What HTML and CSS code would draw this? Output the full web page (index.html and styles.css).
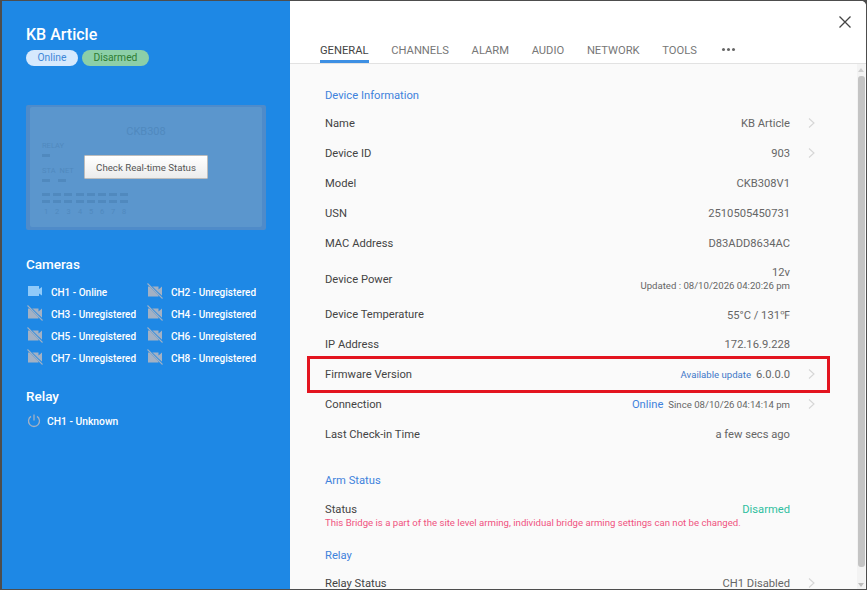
FILE: index.html
```html
<!DOCTYPE html>
<html lang="en">
<head>
  <meta charset="UTF-8">
  <title>KB Article - Device</title>
  <link rel="stylesheet" href="styles.css">
</head>
<body>
  <svg class="defs" width="0" height="0">
    <symbol id="chevron" viewBox="0 0 7 10"><path d="M1 0.500l5 4.500-5 4.500" fill="none" stroke="#d6d6d6" stroke-width="1.100"/></symbol>
    <symbol id="cam-off" viewBox="0 0 16 16">
      <path d="M1 3.500h10.500v3l3.500-3v9.500l-3.500-3v3.500H1z" fill="#a3b1c4"/>
      <path d="M1 0.500L15.500 15" stroke="#1e88e5" stroke-width="2"/>
      <path d="M0.500 0.500L15.500 15.500" stroke="#a3b1c4" stroke-width="1.100"/>
    </symbol>
  </svg>

  <div class="modal">
    <div class="side">
      <h1 class="side-title">KB Article</h1>
      <div class="badges">
        <span class="badge badge-online">Online</span>
        <span class="badge badge-disarmed">Disarmed</span>
      </div>

      <div class="board">
        <div class="board-inner">
          <div class="board-name">CKB308</div>
          <div class="board-label">RELAY</div>
          <div class="led-row"><i></i></div>
          <div class="board-label board-label-2"><span>STA</span><span>NET</span></div>
          <div class="led-row led-row-2"><i></i><i></i></div>
          <div class="led-grid">
            <i></i><i></i><i></i><i></i><i></i><i></i><i></i><i></i>
            <i></i><i></i><i></i><i></i><i></i><i></i><i></i><i></i>
            <span>1</span><span>2</span><span>3</span><span>4</span><span>5</span><span>6</span><span>7</span><span>8</span>
          </div>
        </div>
        <button class="board-btn">Check Real-time Status</button>
      </div>

      <h2 class="side-head">Cameras</h2>
      <div class="cams">
        <div class="cam">
          <svg class="cam-icon" viewBox="0 0 16 16"><path d="M1 3h11v3l3-2v8.500l-3-2v2.500H1z" fill="#90caf9"/></svg>
          CH1 - Online
        </div>
        <div class="cam"><svg class="cam-icon"><use href="#cam-off"/></svg>CH2 - Unregistered</div>
        <div class="cam"><svg class="cam-icon"><use href="#cam-off"/></svg>CH3 - Unregistered</div>
        <div class="cam"><svg class="cam-icon"><use href="#cam-off"/></svg>CH4 - Unregistered</div>
        <div class="cam"><svg class="cam-icon"><use href="#cam-off"/></svg>CH5 - Unregistered</div>
        <div class="cam"><svg class="cam-icon"><use href="#cam-off"/></svg>CH6 - Unregistered</div>
        <div class="cam"><svg class="cam-icon"><use href="#cam-off"/></svg>CH7 - Unregistered</div>
        <div class="cam"><svg class="cam-icon"><use href="#cam-off"/></svg>CH8 - Unregistered</div>
      </div>

      <h2 class="side-head relay-head">Relay</h2>
      <div class="relay">
        <svg class="relay-icon" viewBox="0 0 14 14"><path d="M7 0.500v6M4 2.400a5.500 5.500 0 1 0 6 0" fill="none" stroke="#a3b1c4" stroke-width="1.300"/></svg>
        CH1 - Unknown
      </div>
    </div>

    <div class="main">
      <div class="top">
        <svg class="close" viewBox="0 0 12 12"><path d="M0.500 0.500l11 11M11.500 0.500l-11 11" stroke="#444" stroke-width="1.300"/></svg>
        <div class="tabs">
          <span class="tab active">GENERAL</span>
          <span class="tab">CHANNELS</span>
          <span class="tab">ALARM</span>
          <span class="tab">AUDIO</span>
          <span class="tab">NETWORK</span>
          <span class="tab">TOOLS</span>
          <span class="tab-more"><i></i><i></i><i></i></span>
        </div>
      </div>

      <div class="body">
        <div class="content">
          <div class="section-title">Device Information</div>
          <div class="row"><span>Name</span><span class="val">KB Article</span><svg class="chev"><use href="#chevron"/></svg></div>
          <div class="row"><span>Device ID</span><span class="val">903</span><svg class="chev"><use href="#chevron"/></svg></div>
          <div class="row"><span>Model</span><span class="val">CKB308V1</span><span class="no-chev"></span></div>
          <div class="row"><span>USN</span><span class="val">2510505450731</span><span class="no-chev"></span></div>
          <div class="row"><span>MAC Address</span><span class="val">D83ADD8634AC</span><span class="no-chev"></span></div>
          <div class="row row-tall">
            <span>Device Power</span>
            <span class="val val-stack">12v<small>Updated : 08/10/2026 04:20:26 pm</small></span>
            <span class="no-chev"></span>
          </div>
          <div class="row"><span>Device Temperature</span><span class="val">55°C / 131℉</span><span class="no-chev"></span></div>
          <div class="row"><span>IP Address</span><span class="val">172.16.9.228</span><span class="no-chev"></span></div>
          <div class="row">
            <span>Firmware Version</span>
            <span class="val"><span class="update">Available update</span>6.0.0.0</span>
            <svg class="chev"><use href="#chevron"/></svg>
            <div class="highlight"></div>
          </div>
          <div class="row">
            <span>Connection</span>
            <span class="val"><span class="online">Online</span><small>Since 08/10/26 04:14:14 pm</small></span>
            <svg class="chev"><use href="#chevron"/></svg>
          </div>
          <div class="row"><span>Last Check-in Time</span><span class="val">a few secs ago</span><span class="no-chev"></span></div>

          <div class="section-title">Arm Status</div>
          <div class="status">
            <div class="status-line"><span>Status</span><span class="disarmed">Disarmed</span><span class="no-chev"></span></div>
            <div class="note">This Bridge is a part of the site level arming, individual bridge arming settings can not be changed.</div>
          </div>

          <div class="section-title section-title-tight">Relay</div>
          <div class="row"><span>Relay Status</span><span class="val">CH1 Disabled</span><svg class="chev"><use href="#chevron"/></svg></div>
        </div>

        <div class="scrollbar">
          <span class="arrow arrow-up"></span>
          <span class="thumb"></span>
          <span class="arrow arrow-down"></span>
        </div>
      </div>
    </div>
  </div>
</body>
</html>
```

FILE: styles.css
```css
* {
  box-sizing: border-box;
}
html, body {
  height: 100%;
}
body {
  margin: 0;
  padding: 1px 1px 1px 2px;
  background: #4d4d4d;
  font-family: Roboto, "Liberation Sans", sans-serif;
  font-size: 11.200px;
  overflow: hidden;
}
.defs {
  position: absolute;
}
.modal {
  display: flex;
  height: 100%;
  border-radius: 0 5px 0 0;
  overflow: hidden;
  background: #fff;
}

/* left panel */
.side {
  width: 288px;
  flex-shrink: 0;
  background: #1e88e5;
  padding: 24px 24px 0;
  color: #fff;
}
.side-title {
  margin: 0;
  font-size: 16px;
  font-weight: 500;
  line-height: 19px;
}
.badges {
  display: flex;
  gap: 4px;
  margin-top: 6px;
}
.badge {
  height: 16px;
  padding: 0 11.500px;
  border-radius: 8px;
  font-size: 10.300px;
  line-height: 16px;
}
.badge-online {
  background: #d6e9fd;
  color: #3f88d8;
}
.badge-disarmed {
  background: #8ccfa8;
  color: #2e7d32;
}
.board {
  position: relative;
  width: 240px;
  height: 125px;
  margin-top: 39px;
  padding: 2px 4px 3px;
  border-radius: 2px;
  background: #4f8bc9;
}
.board-inner {
  height: 100%;
  padding: 18px 12px 0;
  border-radius: 2px;
  background: #5b96cd;
  color: #5089be;
}
.board-name {
  font-size: 11px;
  line-height: 14px;
  text-align: center;
}
.board-label {
  margin-top: 2px;
  font-size: 7.500px;
  line-height: 10px;
}
.board-label-2 {
  display: flex;
  gap: 4px;
  margin-top: 9px;
}
.led-row {
  display: flex;
  gap: 8px;
  margin-top: 3px;
}
.led-row i, .led-grid i {
  display: block;
  width: 8px;
  height: 3px;
  background: #5089be;
}
.led-grid {
  display: grid;
  grid-template-columns: repeat(2, 8px) 9px repeat(5, 8px);
  column-gap: 3px;
  row-gap: 4px;
  margin-top: 11px;
  font-size: 7.500px;
  line-height: 9px;
  text-align: center;
}
.board-btn {
  position: absolute;
  left: 58px;
  top: 50px;
  width: 124px;
  height: 24px;
  padding: 0;
  border: 1px solid #bdbdbd;
  border-radius: 1px;
  background: linear-gradient(#fff, #ececec);
  color: #555;
  font-family: inherit;
  font-size: 9.700px;
}
.side-head {
  margin: 26px 0 0;
  font-size: 13.500px;
  font-weight: 500;
  line-height: 16px;
}
.cams {
  display: grid;
  grid-template-columns: 120px 120px;
  grid-auto-rows: 22px;
  margin-top: 9px;
  padding-left: 1px;
}
.cam {
  display: flex;
  align-items: center;
  gap: 8px;
  font-size: 10px;
  font-weight: 500;
}
.cam-icon {
  width: 16px;
  height: 16px;
  flex-shrink: 0;
  margin-top: -3px;
}
.relay-head {
  margin-top: 19px;
}
.relay {
  display: flex;
  align-items: center;
  gap: 6px;
  margin-top: 10px;
  padding-left: 1px;
  font-size: 10.300px;
  font-weight: 500;
}
.relay-icon {
  width: 14px;
  height: 14px;
}

/* right panel */
.main {
  flex: 1;
  min-width: 0;
  display: flex;
  flex-direction: column;
}
.top {
  position: relative;
  height: 63px;
  flex-shrink: 0;
  display: flex;
  align-items: flex-end;
  padding-left: 30px;
  background: #fff;
  border-bottom: 1px solid #e2e2e2;
}
.close {
  position: absolute;
  right: 15px;
  top: 15px;
  width: 12px;
  height: 12px;
}
.tabs {
  display: flex;
  align-items: flex-end;
  gap: 22.700px;
}
.tab {
  height: 25px;
  padding-top: 5px;
  color: #777;
  font-size: 11.200px;
  line-height: 15px;
}
.tab.active {
  color: #444;
  border-bottom: 3px solid #3d8fe3;
}
.tab-more {
  display: flex;
  gap: 2px;
  height: 25px;
  padding: 10px 2px 0;
}
.tab-more i {
  width: 3px;
  height: 3px;
  border-radius: 50%;
  background: #666;
}
.body {
  flex: 1;
  min-height: 0;
  display: flex;
  background: #fafafa;
}
.content {
  flex: 1;
  min-width: 0;
  padding: 22px 38px 0 35px;
  overflow: hidden;
  color: #444;
}
.section-title {
  margin-bottom: 3px;
  padding-top: 1px;
  color: #3f82dc;
  line-height: 18px;
}
.row + .section-title {
  margin-top: 22px;
}
.section-title-tight {
  margin-top: 18px;
}
.row {
  position: relative;
  display: flex;
  align-items: center;
  height: 30px;
}
.row-tall {
  height: 41px;
  padding-top: 1px;
}
.val {
  margin-left: auto;
  color: #666;
  white-space: nowrap;
}
.val-stack {
  display: flex;
  flex-direction: column;
  align-items: flex-end;
  line-height: 13px;
}
.val small {
  font-size: 9.600px;
}
.chev {
  width: 7px;
  height: 10px;
  margin: 0 4px 0 18px;
}
.no-chev {
  width: 29px;
  flex-shrink: 0;
}
.update {
  margin-right: 5px;
  color: #3f78c8;
  font-size: 9.600px;
}
.online {
  margin-right: 5px;
  color: #3f82dc;
}
.highlight {
  position: absolute;
  left: -18px;
  right: -11px;
  top: -3px;
  bottom: -4px;
  border: 3px solid #e3141f;
}
.status {
  height: 35px;
  padding-top: 10px;
}
.status-line {
  display: flex;
  line-height: 14px;
}
.disarmed {
  margin-left: auto;
  color: #2fbf9f;
}
.note {
  color: #f0537f;
  font-size: 9.600px;
  line-height: 12px;
}
.scrollbar {
  width: 8px;
  margin-right: 1px;
  display: flex;
  flex-direction: column;
  align-items: center;
  background: #f3f3f3;
}
.thumb {
  flex: 1;
  width: 7px;
  border-radius: 3px;
  background: #c4c4c4;
}
.arrow {
  flex-shrink: 0;
  width: 0;
  height: 0;
  border-left: 3.500px solid transparent;
  border-right: 3.500px solid transparent;
}
.arrow-up {
  margin: 4px 0 4px;
  border-bottom: 4px solid #cfcfcf;
}
.arrow-down {
  margin: 16px 0 2px;
  border-top: 4px solid #bdbdbd;
}
```
